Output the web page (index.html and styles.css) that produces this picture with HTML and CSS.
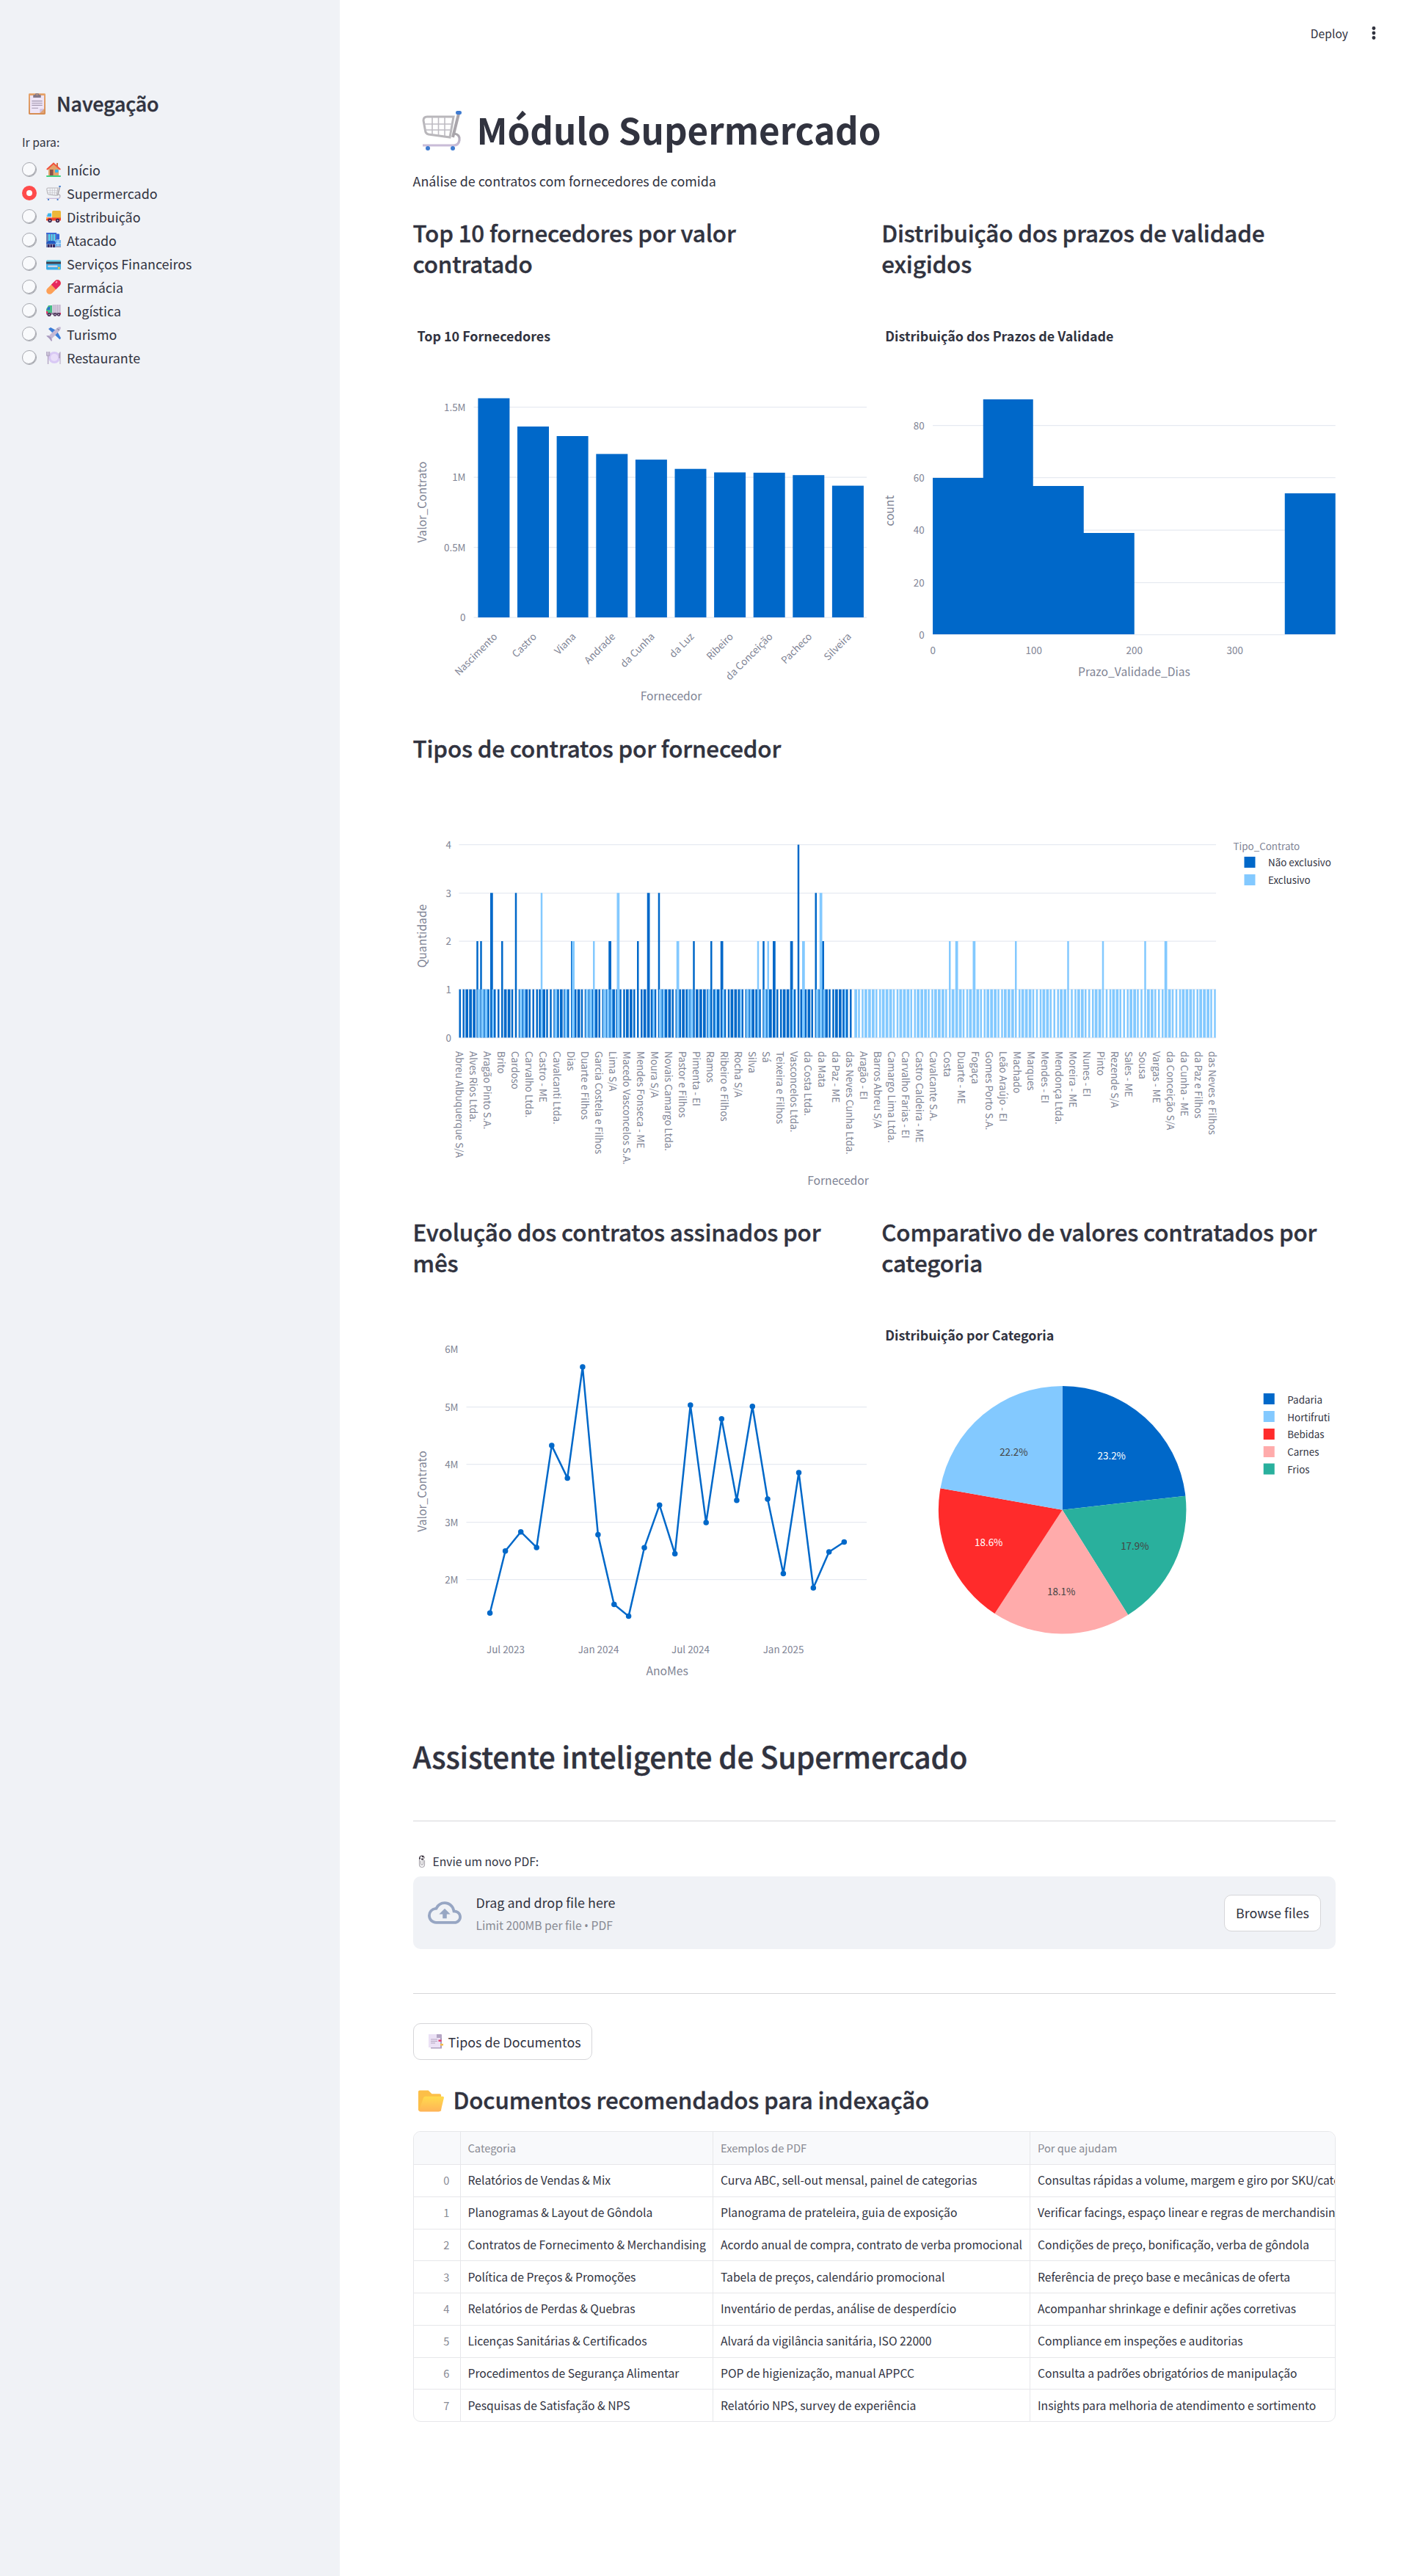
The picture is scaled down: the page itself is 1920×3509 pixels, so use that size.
FILE: index.html
```html
<!DOCTYPE html>
<html lang="pt-BR">
<head>
<meta charset="utf-8">
<title>Módulo Supermercado</title>
<link rel="stylesheet" href="styles.css">
</head>
<body>
<svg class="defs" aria-hidden="true">
  <defs>
    <linearGradient id="gold" x1="0" y1="0" x2="0" y2="1"><stop offset="0" stop-color="#ffdb4d"/><stop offset="1" stop-color="#ffb357"/></linearGradient>
    <linearGradient id="steel" x1="0" y1="0" x2="0" y2="1"><stop offset="0" stop-color="#a6a4a8"/><stop offset="1" stop-color="#c9bcd8"/></linearGradient>
    <linearGradient id="wood" x1="0" y1="0" x2="0" y2="1"><stop offset="0" stop-color="#e5a268"/><stop offset="1" stop-color="#d68d53"/></linearGradient>
    <symbol id="clipboard" viewBox="0 0 24 30"><rect width="24" height="30" rx="1.5" fill="url(#wood)"/><path d="M2 3h20v19l-6 6H2z" fill="#eee5f7"/><path d="M22 22l-6 6h6z" fill="#e0a377"/><path d="M16 28v-5q0-1 1-1h5z" fill="#cdbfdc"/><path d="M4.500 11h15M4.500 14h15M4.500 17h15M4.500 21h9" stroke="#a296ae" stroke-width="1.200"/><path d="M6.500 6V3.500Q6.500 2 8 2h1.500V1q0-1 1-1h3q1 0 1 1v1H16q1.500 0 1.500 1.500V6z" fill="#837889"/><circle cx="12" cy="2" r="1" fill="#d9a070"/></symbol>
    <symbol id="house" viewBox="0 0 20 20"><rect y="18" width="20" height="2" rx="1" fill="#3fd07f"/><path d="M3 9l7-7 7 7v9H3z" fill="#e2a36b"/><path d="M14 1h2v5h-2z" fill="#c9764b"/><path d="M.8 10L10 1.500 19.200 10" fill="none" stroke="#f1503b" stroke-width="2"/><rect x="5" y="10" width="4.500" height="8" fill="#8b5148"/><rect x="12" y="10" width="4.500" height="4" fill="#35b5ec"/></symbol>
    <symbol id="cart" viewBox="0 0 54 54"><path d="M50 4L42 36" stroke="#a9a5ab" stroke-width="4" fill="none"/><path d="M7 8H43L38 36 9 32Q5 31 4.500 27L2 13Q2 8 7 8z" fill="none" stroke="#b9b7bb" stroke-width="3"/><path d="M14 9v23M22.500 9v24M31 9v25M3 18h38M4 26h36" stroke="#bfbcc3" stroke-width="1.600"/><path d="M44 31Q52 32 51 40 50 47 43 47H1" fill="none" stroke="url(#steel)" stroke-width="3.200"/><circle cx="8" cy="51" r="3" fill="#3f7bd0"/><circle cx="42" cy="51" r="3" fill="#3f7bd0"/><rect x="46" y="0" width="8" height="5" rx="2.300" fill="#3f7bd0"/></symbol>
    <symbol id="truck" viewBox="0 0 20 20"><path d="M8 3.500Q8 2 9.500 2h9Q20 2 20 3.500V14H8z" fill="#ecb83a"/><path d="M0 8l2-2h5.500v8H0z" fill="#ddd5e8"/><path d="M1 10l1.500-4.500H7V10z" fill="#3ab7e8"/><path d="M0 11.500h20v4H0z" fill="#f4462e"/><rect x="0" y="11" width="2" height="2" fill="#fdbe39"/><circle cx="5" cy="15.500" r="2.700" fill="#3c2148"/><circle cx="15.500" cy="15.500" r="2.700" fill="#3c2148"/><circle cx="5" cy="15.500" r="1" fill="#cfc3dc"/><circle cx="15.500" cy="15.500" r="1" fill="#cfc3dc"/></symbol>
    <symbol id="store" viewBox="0 0 20 20"><rect x="0" y="0" width="14" height="20" fill="#6f83b7"/><rect width="14" height="2" fill="#3c69d6"/><path d="M3 2h2v9H3zM6.500 2h2v9h-2zM10 2h2v9h-2z" fill="#4dd6f5"/><rect x="13.500" y="1.500" width="4.500" height="8" rx="1" fill="#3565d9"/><rect x="12" y="10" width="8" height="10" fill="#74b7ef"/><path d="M13 14.500h7M16 11v7" stroke="#b9e2ff"/><path d="M0 15q1-4 5-4h4q4 0 4 4z" fill="#225bc4"/><path d="M2 16h10v4H2z" fill="#392a62"/><path d="M5 16v4M8.500 16v4" stroke="#b1a7c5"/><path d="M13 18.500h7V20h-7z" fill="#a9a0bc"/></symbol>
    <symbol id="card" viewBox="0 0 20 20"><rect y="5.500" width="20" height="13" rx="1.500" fill="#3eaee8"/><path d="M0 8V7q0-1.500 1.500-1.500h17Q20 5.500 20 7v1z" fill="#66d5ee"/><rect y="7.500" width="20" height="3" fill="#42424f"/><rect x="2" y="12.500" width="13.500" height="2.500" rx="1" fill="#cdd2e4"/><circle cx="17.300" cy="16" r="1.500" fill="#f4c635"/></symbol>
    <symbol id="pill" viewBox="0 0 20 20"><g transform="rotate(-45 10 10)"><rect x="-2" y="5.500" width="24" height="9" rx="4.500" fill="#fda057"/><path d="M10 5.500h7.500a4.500 4.500 0 0 1 0 9H10z" fill="#e6285d"/><rect x="16" y="7" width="3" height="2" rx="1" fill="#ff9dbb"/></g></symbol>
    <symbol id="lorry" viewBox="0 0 20 20"><path d="M8 2h12v13H8z" fill="#d7cddf"/><path d="M10.500 2v12M13 2v12M15.500 2v12M18 2v12" stroke="#b6aac4" stroke-width=".8"/><path d="M0 8l3-5h5v12H0z" fill="#47bd88"/><path d="M1 8l2-3h2v4H1z" fill="#2b6fd0"/><path d="M0 13h20v2.500H0z" fill="#8b7f99"/><path d="M0 11h2v3H0zM18.500 13H20v2h-1.500z" fill="#ee3267"/><circle cx="4" cy="15.500" r="2.500" fill="#3c2148"/><circle cx="12" cy="15.500" r="2.300" fill="#3c2148"/><circle cx="17" cy="15.500" r="2.300" fill="#3c2148"/><g fill="#cfc3dc"><circle cx="4" cy="15.500" r=".9"/><circle cx="12" cy="15.500" r=".9"/><circle cx="17" cy="15.500" r=".9"/></g></symbol>
    <symbol id="plane" viewBox="0 0 20 20"><path d="M3 3l3-2 9 5-4 5zM18.500 17.500l1.500-2-5-9-5 3z" fill="#3b7dd8"/><path d="M0 12.500l3-.5 4 2 1 5-1 1-3-4z" fill="#a99ac0"/><path d="M19.500 .5q1 2-1.500 5L8 16l-4-4L14.500 2q3-2.500 5-1.500z" fill="#c4b8d4"/><path d="M15 2.500l2.500 2.500" stroke="#6b7280"/></symbol>
    <symbol id="plate" viewBox="0 0 20 20"><circle cx="11" cy="10" r="8" fill="#d9c9f5"/><circle cx="11" cy="10" r="5" fill="#e9def9"/><path d="M.5 2v4q0 2 2 2t2-2V2M2.500 2v17" fill="none" stroke="#b3a6c4" stroke-width="1.400"/><path d="M19.500 19V2q-2.500 1-2.500 5v4h1.500v8z" fill="#b3a6c4"/></symbol>
    <symbol id="clips" viewBox="0 0 10 18"><path d="M1.500 6v7q0 4 3.500 4t3.500-4V7.500M3.500 8v4q0 2 1.500 2t1.500-2V5.500" fill="none" stroke="#a9a6ad" stroke-width="1.200"/><path d="M1.500 5Q2 1.500 5 1.500T8 5" fill="none" stroke="#77727a" stroke-width="1.500"/><path d="M1 4h2v2H1zM5 1.500h2v2H5zM4 5h3v2H4z" fill="#3d3440"/></symbol>
    <symbol id="tabs" viewBox="0 0 20 20"><path d="M3 2h15v17.500H3z" fill="#ae9fbe"/><path d="M0 0h12v5h4v13H0z" fill="#ebe1f5"/><path d="M11 0h6q1 0 1 1v4h-7z" fill="#b4a5c4"/><path d="M3 7h9M3 9.500h9M3 12h6" stroke="#b3a6c0" stroke-width="1.100"/><rect x="13.500" y="7.500" width="4" height="2.500" fill="#e83a6c"/><rect x="16" y="13" width="4" height="2.500" fill="#f4bd4b"/></symbol>
    <symbol id="folder" viewBox="0 0 36 30"><path d="M0 2Q0 0 2 0h12l5 5h11q2 0 2 2v22H2q-2 0-2-2z" fill="#fcbf48"/><path d="M7 11q.8-2.500 3-2.500h24q2.500 0 1.800 2.500l-4 16.500Q31 30 28.500 30H3Q.5 30 1.200 27.500z" fill="url(#gold)"/></symbol>
  </defs>
</svg>

<aside class="sidebar">
  <h2 class="nav-title"><svg class="nav-title-icon"><use href="#clipboard"/></svg>Navegação</h2>
  <p class="nav-label">Ir para:</p>
  <ul class="nav">
    <li><i class="radio"></i><svg><use href="#house"/></svg>Início</li>
    <li><i class="radio on"></i><svg><use href="#cart"/></svg>Supermercado</li>
    <li><i class="radio"></i><svg><use href="#truck"/></svg>Distribuição</li>
    <li><i class="radio"></i><svg><use href="#store"/></svg>Atacado</li>
    <li><i class="radio"></i><svg><use href="#card"/></svg>Serviços Financeiros</li>
    <li><i class="radio"></i><svg><use href="#pill"/></svg>Farmácia</li>
    <li><i class="radio"></i><svg><use href="#lorry"/></svg>Logística</li>
    <li><i class="radio"></i><svg><use href="#plane"/></svg>Turismo</li>
    <li><i class="radio"></i><svg><use href="#plate"/></svg>Restaurante</li>
  </ul>
</aside>

<main class="main">
  <header class="toolbar">
    <span>Deploy</span>
    <svg class="kebab" viewBox="0 0 6 20"><circle cx="3" cy="3.500" r="2.400"/><circle cx="3" cy="10" r="2.400"/><circle cx="3" cy="16.500" r="2.400"/></svg>
  </header>

  <h1 class="title"><svg class="title-icon"><use href="#cart"/></svg>Módulo Supermercado</h1>
  <p class="lead">Análise de contratos com fornecedores de comida</p>

  <section class="columns">
    <div>
      <h3>Top 10 fornecedores por valor<br>contratado</h3>
      <svg class="chart" viewBox="562.500 400 618.750 570">
        <text class="ctitle" x="568" y="465">Top 10 Fornecedores</text>
        <path class="grid" d="M645 554.500H1181M645 650H1181M645 745.500H1181M645 841H1181"/>
        <g class="tick end"><text x="634" y="560">1.5M</text><text x="634" y="655">1M</text><text x="634" y="751">0.5M</text><text x="634" y="846">0</text></g>
        <g fill="#0068c9"><rect x="650.900" y="542.500" width="43" height="298.500"/><rect x="704.500" y="581" width="43" height="260"/><rect x="758.100" y="594" width="43" height="247"/><rect x="811.800" y="618.400" width="43" height="222.600"/><rect x="865.400" y="626.100" width="43" height="214.900"/><rect x="919" y="638.700" width="43" height="202.300"/><rect x="972.600" y="643.500" width="43" height="197.500"/><rect x="1026.200" y="643.900" width="43" height="197.100"/><rect x="1079.800" y="647.200" width="43" height="193.800"/><rect x="1133.400" y="661.600" width="43" height="179.400"/></g>
        <g class="tick end">
          <text transform="translate(678 868) rotate(-45)">Nascimento</text><text transform="translate(731.600 868) rotate(-45)">Castro</text><text transform="translate(785.200 868) rotate(-45)">Viana</text><text transform="translate(838.800 868) rotate(-45)">Andrade</text><text transform="translate(892.400 868) rotate(-45)">da Cunha</text><text transform="translate(946 868) rotate(-45)">da Luz</text><text transform="translate(999.600 868) rotate(-45)">Ribeiro</text><text transform="translate(1053.200 868) rotate(-45)">da Conceição</text><text transform="translate(1106.800 868) rotate(-45)">Pacheco</text><text transform="translate(1160.400 868) rotate(-45)">Silveira</text>
        </g>
        <text class="axis" x="914" y="954">Fornecedor</text>
        <text class="axis" transform="translate(580 684) rotate(-90)">Valor_Contrato</text>
      </svg>
    </div>
    <div>
      <h3>Distribuição dos prazos de validade exigidos</h3>
      <svg class="chart" viewBox="1201.250 400 618.750 570">
        <text class="ctitle" x="1206.500" y="465">Distribuição dos Prazos de Validade</text>
        <path class="grid" d="M1271.300 579.500H1820M1271.300 650.500H1820M1271.300 722H1820M1271.300 793.500H1820M1271.300 864.500H1820"/>
        <path fill="#0068c9" d="M1271.300 864V651H1340V544H1408V662H1477V726H1546V864zM1751 864V672H1820V864z"/>
        <g class="tick end"><text x="1260" y="585">80</text><text x="1260" y="656">60</text><text x="1260" y="727">40</text><text x="1260" y="799">20</text><text x="1260" y="870">0</text></g>
        <g class="tick mid"><text x="1271.500" y="891">0</text><text x="1409" y="891">100</text><text x="1546" y="891">200</text><text x="1683" y="891">300</text></g>
        <text class="axis" x="1545.700" y="921">Prazo_Validade_Dias</text>
        <text class="axis" transform="translate(1218.700 695.700) rotate(-90)">count</text>
      </svg>
    </div>
  </section>

  <h3 class="wide-heading">Tipos de contratos por fornecedor</h3>
  <svg class="chart" id="tipos" viewBox="562.500 1060 1257.500 563">
    <path class="grid" d="M624.900 1150.500H1656.600M624.900 1216.500H1656.600M624.900 1282H1656.600M624.900 1347.500H1656.600M624.900 1413.500H1656.600"/>
    <g class="tick end"><text x="614.500" y="1156">4</text><text x="614.500" y="1222">3</text><text x="614.500" y="1287">2</text><text x="614.500" y="1353">1</text><text x="614.500" y="1419">0</text></g>
    <g id="bars"></g>
    <g id="names" class="tick"></g>
    <text class="axis" x="1141.500" y="1614">Fornecedor</text>
    <text class="axis" transform="translate(580 1275) rotate(-90)">Quantidade</text>
    <text class="tick" x="1680" y="1158">Tipo_Contrato</text>
    <rect x="1695" y="1167" width="15" height="15" fill="#0068c9"/><rect x="1695" y="1191" width="15" height="15" fill="#83c9ff"/>
    <g class="legend"><text x="1727.500" y="1180">Não exclusivo</text><text x="1727.500" y="1204">Exclusivo</text></g>
  </svg>

  <section class="columns second">
    <div>
      <h3>Evolução dos contratos assinados por mês</h3>
      <svg class="chart" viewBox="562.500 1761 618.750 563">
        <path class="grid" d="M635 1916.500H1181M635 1994.500H1181M635 2073.500H1181M635 2151.500H1181"/>
        <g class="tick end"><text x="624" y="1843">6M</text><text x="624" y="1922">5M</text><text x="624" y="2000">4M</text><text x="624" y="2079">3M</text><text x="624" y="2157">2M</text></g>
        <polyline class="line" points="667.1,2197.2 688.1,2112.7 709.2,2086.7 730.7,2107.9 751.3,1969.1 772.7,2013.4 793.4,1862 814.4,2090.6 836.3,2185.5 856.1,2201.6 877.5,2108.3 898.2,2050.2 919.2,2116.6 940.3,1914.1 961.7,2074.1 982.8,1932.7 1003.4,2043.7 1024.8,1915.8 1045.5,2042 1066.9,2143.5 1088,2006 1107.8,2163 1129.2,2114 1149.8,2100.5"/>
        <g class="tick mid"><text x="688.500" y="2252">Jul 2023</text><text x="815" y="2252">Jan 2024</text><text x="940.500" y="2252">Jul 2024</text><text x="1067" y="2252">Jan 2025</text></g>
        <text class="axis" x="908.700" y="2282">AnoMes</text>
        <text class="axis" transform="translate(580 2031.600) rotate(-90)">Valor_Contrato</text>
      </svg>
    </div>
    <div>
      <h3>Comparativo de valores contratados por categoria</h3>
      <svg class="chart" viewBox="1201.250 1761 618.750 563">
        <text class="ctitle" x="1206.500" y="1826">Distribuição por Categoria</text>
        <g id="pie"></g>
        <g class="tick mid"><text class="on-dark" x="1515" y="1987.500">23.2%</text><text class="on-light" x="1546.600" y="2110.500">17.9%</text><text class="on-light" x="1446.400" y="2172.500">18.1%</text><text class="on-dark" x="1347.500" y="2105.500">18.6%</text><text class="on-light" x="1381.600" y="1983">22.2%</text></g>
        <rect x="1722" y="1898" width="15" height="15" fill="#0068c9"/><rect x="1722" y="1922" width="15" height="15" fill="#83c9ff"/><rect x="1722" y="1946" width="15" height="15" fill="#ff2b2b"/><rect x="1722" y="1970" width="15" height="15" fill="#ffabab"/><rect x="1722" y="1993.500" width="15" height="15" fill="#29b09d"/>
        <g class="legend"><text x="1754.500" y="1912">Padaria</text><text x="1754.500" y="1936">Hortifruti</text><text x="1754.500" y="1959">Bebidas</text><text x="1754.500" y="1983">Carnes</text><text x="1754.500" y="2007">Frios</text></g>
      </svg>
    </div>
  </section>

  <h2 class="assistant">Assistente inteligente de Supermercado</h2>
  <hr>
  <p class="upload-label"><svg><use href="#clips"/></svg>Envie um novo PDF:</p>
  <div class="uploader">
    <svg class="cloud" viewBox="0 4 24 16"><path d="M19.350 10.040A7.490 7.490 0 0 0 12 4C9.110 4 6.600 5.640 5.350 8.040A5.994 5.994 0 0 0 0 14c0 3.310 2.690 6 6 6h13c2.760 0 5-2.240 5-5 0-2.640-2.050-4.780-4.650-4.960zM19 18H6c-2.210 0-4-1.790-4-4 0-2.050 1.530-3.760 3.560-3.970l1.070-.11.5-.95A5.469 5.469 0 0 1 12 6c2.620 0 4.880 1.860 5.390 4.430l.3 1.500 1.530.11A2.980 2.980 0 0 1 22 15c0 1.650-1.350 3-3 3zM8 13h2.550v3h2.900v-3H16l-4-4z"/></svg>
    <div class="drop"><span>Drag and drop file here</span><small>Limit 200MB per file <b>•</b> PDF</small></div>
    <button class="browse">Browse files</button>
  </div>
  <hr class="hr2">
  <button class="types"><svg><use href="#tabs"/></svg>Tipos de Documentos</button>
  <h3 class="docs"><svg><use href="#folder"/></svg>Documentos recomendados para indexação</h3>
  <div class="frame">
    <table>
      <colgroup><col class="c0"><col class="c1"><col class="c2"><col class="c3"></colgroup>
      <tr><th></th><th>Categoria</th><th>Exemplos de PDF</th><th>Por que ajudam</th></tr>
      <tr><td>0</td><td>Relatórios de Vendas &amp; Mix</td><td>Curva ABC, sell-out mensal, painel de categorias</td><td>Consultas rápidas a volume, margem e giro por SKU/categoria</td></tr>
      <tr><td>1</td><td>Planogramas &amp; Layout de Gôndola</td><td>Planograma de prateleira, guia de exposição</td><td>Verificar facings, espaço linear e regras de merchandising</td></tr>
      <tr><td>2</td><td>Contratos de Fornecimento &amp; Merchandising</td><td>Acordo anual de compra, contrato de verba promocional</td><td>Condições de preço, bonificação, verba de gôndola</td></tr>
      <tr><td>3</td><td>Política de Preços &amp; Promoções</td><td>Tabela de preços, calendário promocional</td><td>Referência de preço base e mecânicas de oferta</td></tr>
      <tr><td>4</td><td>Relatórios de Perdas &amp; Quebras</td><td>Inventário de perdas, análise de desperdício</td><td>Acompanhar shrinkage e definir ações corretivas</td></tr>
      <tr><td>5</td><td>Licenças Sanitárias &amp; Certificados</td><td>Alvará da vigilância sanitária, ISO 22000</td><td>Compliance em inspeções e auditorias</td></tr>
      <tr><td>6</td><td>Procedimentos de Segurança Alimentar</td><td>POP de higienização, manual APPCC</td><td>Consulta a padrões obrigatórios de manipulação</td></tr>
      <tr><td>7</td><td>Pesquisas de Satisfação &amp; NPS</td><td>Relatório NPS, survey de experiência</td><td>Insights para melhoria de atendimento e sortimento</td></tr>
    </table>
  </div>
</main>
<script src="charts.js"></script>
</body>
</html>
```

FILE: styles.css
```css
:root { --k: .895; }
* { box-sizing: border-box; }
body {
  margin: 0;
  display: flex;
  min-height: 3509px;
  background: #fff;
  color: #31333f;
  font-family: "Noto Sans CJK SC", "Noto Sans", sans-serif;
  font-size: calc(20px * var(--k));
  font-kerning: normal;
}
h1, h2, h3, p, ul { margin: 0; padding: 0; }
h2, h3 { font-weight: 500; letter-spacing: -.0045em; -webkit-text-stroke: .4px currentColor; }
h3 { font-size: calc(35px * var(--k)); line-height: 42px; }
svg { display: block; flex: none; }
.defs { position: absolute; width: 0; height: 0; }

.sidebar { width: 463px; flex: none; background: #f0f2f6; padding: 123px 30px 0; }
.nav-title { display: flex; align-items: center; font-size: calc(30px * var(--k)); line-height: 36px; }
.nav-title-icon { width: 23px; height: 29px; margin: 0 15px 0 9px; }
.nav-label { margin-top: 22px; font-size: calc(17.5px * var(--k)); line-height: 25px; }
.nav { list-style: none; margin-top: 8.6px; }
.nav li { display: flex; align-items: center; height: 32px; line-height: 32px; }
.nav svg { width: 20px; height: 20px; margin: 0 8px 0 13px; }
.radio { width: 20px; height: 20px; border-radius: 50%; background: #f9fafc; border: 1px solid #a5a7ae; box-shadow: inset -1px -1px 0 #a5a7ae; }
.radio.on { background: #fff; border: 6.5px solid #ff4b4b; box-shadow: none; }

.main { flex: 1; min-width: 0; padding: 0 100px 0 99.5px; }
.toolbar { display: flex; justify-content: flex-end; align-items: center; gap: 32px; height: 90px; margin-right: -55px; font-size: calc(17.5px * var(--k)); }
.kebab { width: 6px; height: 20px; fill: #31333f; }
.title { display: flex; align-items: center; margin-top: 52.5px; font-size: calc(55px * var(--k)); line-height: 66px; font-weight: 700; }
.title-icon { width: 54px; height: 54px; margin: 4px 21px 0 12px; }
.lead { margin-top: 21.5px; line-height: 32px; }

.columns { display: grid; grid-template-columns: 1fr 1fr; gap: 20px; margin-top: 34px; }
.columns h3 { height: 84px; margin-bottom: 20px; }
.columns.second { margin-top: 34px; }
.chart { width: 100%; height: auto; }
.wide-heading { margin: 28px 0 20px; }

.grid { stroke: #e6eaf1; stroke-width: 1.25; fill: none; }
.ctitle { font-size: calc(20px * var(--k)); font-weight: 700; fill: #31333f; }
.tick { font-size: calc(15px * var(--k)); fill: #808495; }
.end { text-anchor: end; }
.mid { text-anchor: middle; }
.axis { font-size: calc(17.5px * var(--k)); fill: #808495; text-anchor: middle; }
.legend { font-size: calc(15px * var(--k)); fill: #31333f; }
.line { fill: none; stroke: #0068c9; stroke-width: 2.5; stroke-linejoin: round; }
.on-dark { fill: #fff; }
.on-light { fill: #444; }

.assistant { margin-top: 41px; font-size: calc(45px * var(--k)); line-height: 54px; }
hr { border: 0; height: 1px; margin: 61px 0 0; background: #d6d6d9; }
.upload-label { display: flex; align-items: center; margin-top: 42px; line-height: 25px; font-size: calc(17.5px * var(--k)); }
.upload-label svg { width: 10px; height: 19px; margin: 0 10px 0 7px; }
.uploader { display: flex; align-items: center; height: 99px; margin-top: 8px; padding: 0 20px; border-radius: 10px; background: #f0f2f6; }
.cloud { width: 46px; height: 31px; margin-right: 20px; fill: #97a6c3; overflow: visible; }
.drop { display: flex; flex-direction: column; flex: 1; line-height: 31px; padding-top: 3px; }
.drop small { font-size: calc(17.5px * var(--k)); color: #888a93; }
.drop b { font-family: "Open Sans", sans-serif; font-weight: 400; }
button { font: inherit; color: inherit; background: #fff; border: 1px solid #d6d6d9; border-radius: 10px; height: 50px; }
.browse { width: 132px; padding: 0 0 1px; }
.hr2 { margin-top: 60px; }
.types { display: flex; align-items: center; width: 244px; margin-top: 40px; padding: 0 0 1px 20px; }
.types svg { width: 20px; height: 20px; margin-right: 7px; }
.docs { display: flex; align-items: center; margin-top: 33px; }
.docs svg { width: 35px; height: 30px; margin: 4px 13px 0 7px; }

.frame { margin-top: 22px; height: 396px; border: 1px solid #e6e7ea; border-radius: 10px; overflow: hidden; }
table { width: 1300px; table-layout: fixed; border-collapse: separate; border-spacing: 0; font-size: calc(17.5px * var(--k)); }
.c0 { width: 64px; } .c1 { width: 344.5px; } .c2 { width: 432px; }
th, td { height: 43.75px; padding: 0 9px 0 10px; border: 0 solid #e6e7ea; border-width: 0 1px 1px 0; text-align: left; font-weight: 400; white-space: nowrap; line-height: 24px; }
th { height: 45px; background: #f8f9fb; color: #888a93; font-size: calc(16.4px * var(--k)); }
td:first-child { text-align: right; padding-right: 14px; color: #888a93; font-size: calc(16.4px * var(--k)); }
```

FILE: charts.js
```js
const NS = "http://www.w3.org/2000/svg";
function add(parent, tag, attrs, text) {
  const el = document.createElementNS(NS, tag);
  for (const key in attrs) el.setAttribute(key, attrs[key]);
  if (text) el.textContent = text;
  parent.appendChild(el);
  return el;
}

// Grouped bars: 217 suppliers, one slot per contract type.
// Bar edges are widened to whole steps so that thin bars stay visible.
const left = 625, base = 1413.4, unit = 65.7, step = 1.25, pitch = 825 / 217, width = pitch * 0.4;
const darkCounts = {5:2, 6:2, 9:3, 12:2, 16:3, 32:2, 43:2, 51:2, 54:3, 57:3, 67:2, 72:2, 75:2, 87:2, 90:2, 95:2, 97:4, 102:3, 104:2};
const lightCounts = {23:3, 32:2, 38:2, 45:3, 62:2, 85:2, 88:2, 98:2, 103:3, 140:2, 142:2, 147:2, 159:2, 174:2, 184:2, 196:2, 202:2};
const lightSingles = [5, 6, 7, 9, 17, 18, 27, 30, 36, 37, 41, 42, 43, 55, 57, 58, 65, 66, 71, 73, 75, 80, 82, 83, 87, 95, 102, 104, 110];
const bars = document.getElementById("bars");
function bar(start, count, fill) {
  const x0 = Math.floor(start), x1 = Math.ceil(start + width);
  add(bars, "rect", {x: left + x0 * step, y: base - count * unit, width: (x1 - x0) * step, height: count * unit, fill: fill});
}
for (let i = 0; i < 113; i++) bar(pitch * (i + 0.1), darkCounts[i] || 1, "#0068c9");
for (let i = 0; i < 217; i++) {
  const count = lightCounts[i] || (i > 112 || lightSingles.includes(i) ? 1 : 0);
  if (count) bar(pitch * (i + 0.5), count, "#83c9ff");
}

const names = ["Abreu Albuquerque S/A", "Alves Rios Ltda.", "Aragão Pinto S.A.", "Brito", "Cardoso", "Carvalho Ltda.", "Castro - ME", "Cavalcanti Ltda.", "Dias", "Duarte e Filhos", "Garcia Costela e Filhos", "Lima S/A", "Macedo Vasconcelos S.A.", "Mendes Fonseca - ME", "Moura S/A", "Novais Camargo Ltda.", "Pastor e Filhos", "Pimenta - EI", "Ramos", "Ribeiro e Filhos", "Rocha S/A", "Silva", "Sá", "Teixeira e Filhos", "Vasconcelos Ltda.", "da Costa Ltda.", "da Mata", "da Paz - ME", "das Neves Cunha Ltda.", "Aragão - EI", "Barros Abreu S/A", "Camargo Lima Ltda.", "Carvalho Farias - EI", "Castro Caldeira - ME", "Cavalcante S.A.", "Costa", "Duarte - ME", "Fogaça", "Gomes Porto S.A.", "Leão Araújo - EI", "Machado", "Marques", "Mendes - EI", "Mendonça Ltda.", "Moreira - ME", "Nunes - EI", "Pinto", "Rezende S/A", "Sales - ME", "Sousa", "Vargas - ME", "da Conceição S/A", "da Cunha - ME", "da Paz e Filhos", "das Neves e Filhos"];
const labels = document.getElementById("names");
names.forEach((name, k) => add(labels, "text", {transform: `translate(${620.5 + k * pitch * step * 4} 1432) rotate(90)`}, name));

// Monthly markers
const line = document.querySelector(".line");
for (const p of line.points) add(line.parentNode, "circle", {cx: p.x, cy: p.y, r: 3.75, fill: "#0068c9"});

// Category shares, clockwise from the top
const pie = document.getElementById("pie"), cx = 1447.9, cy = 2056.7, r = 168.8;
let turn = 0;
for (const [share, color] of [[23.2, "#0068c9"], [17.9, "#29b09d"], [18.1, "#ffabab"], [18.6, "#ff2b2b"], [22.2, "#83c9ff"]]) {
  const a = turn * 2 * Math.PI, b = (turn += share / 100) * 2 * Math.PI;
  add(pie, "path", {fill: color, d: `M${cx} ${cy}L${cx + r * Math.sin(a)} ${cy - r * Math.cos(a)}A${r} ${r} 0 0 1 ${cx + r * Math.sin(b)} ${cy - r * Math.cos(b)}Z`});
}
```
